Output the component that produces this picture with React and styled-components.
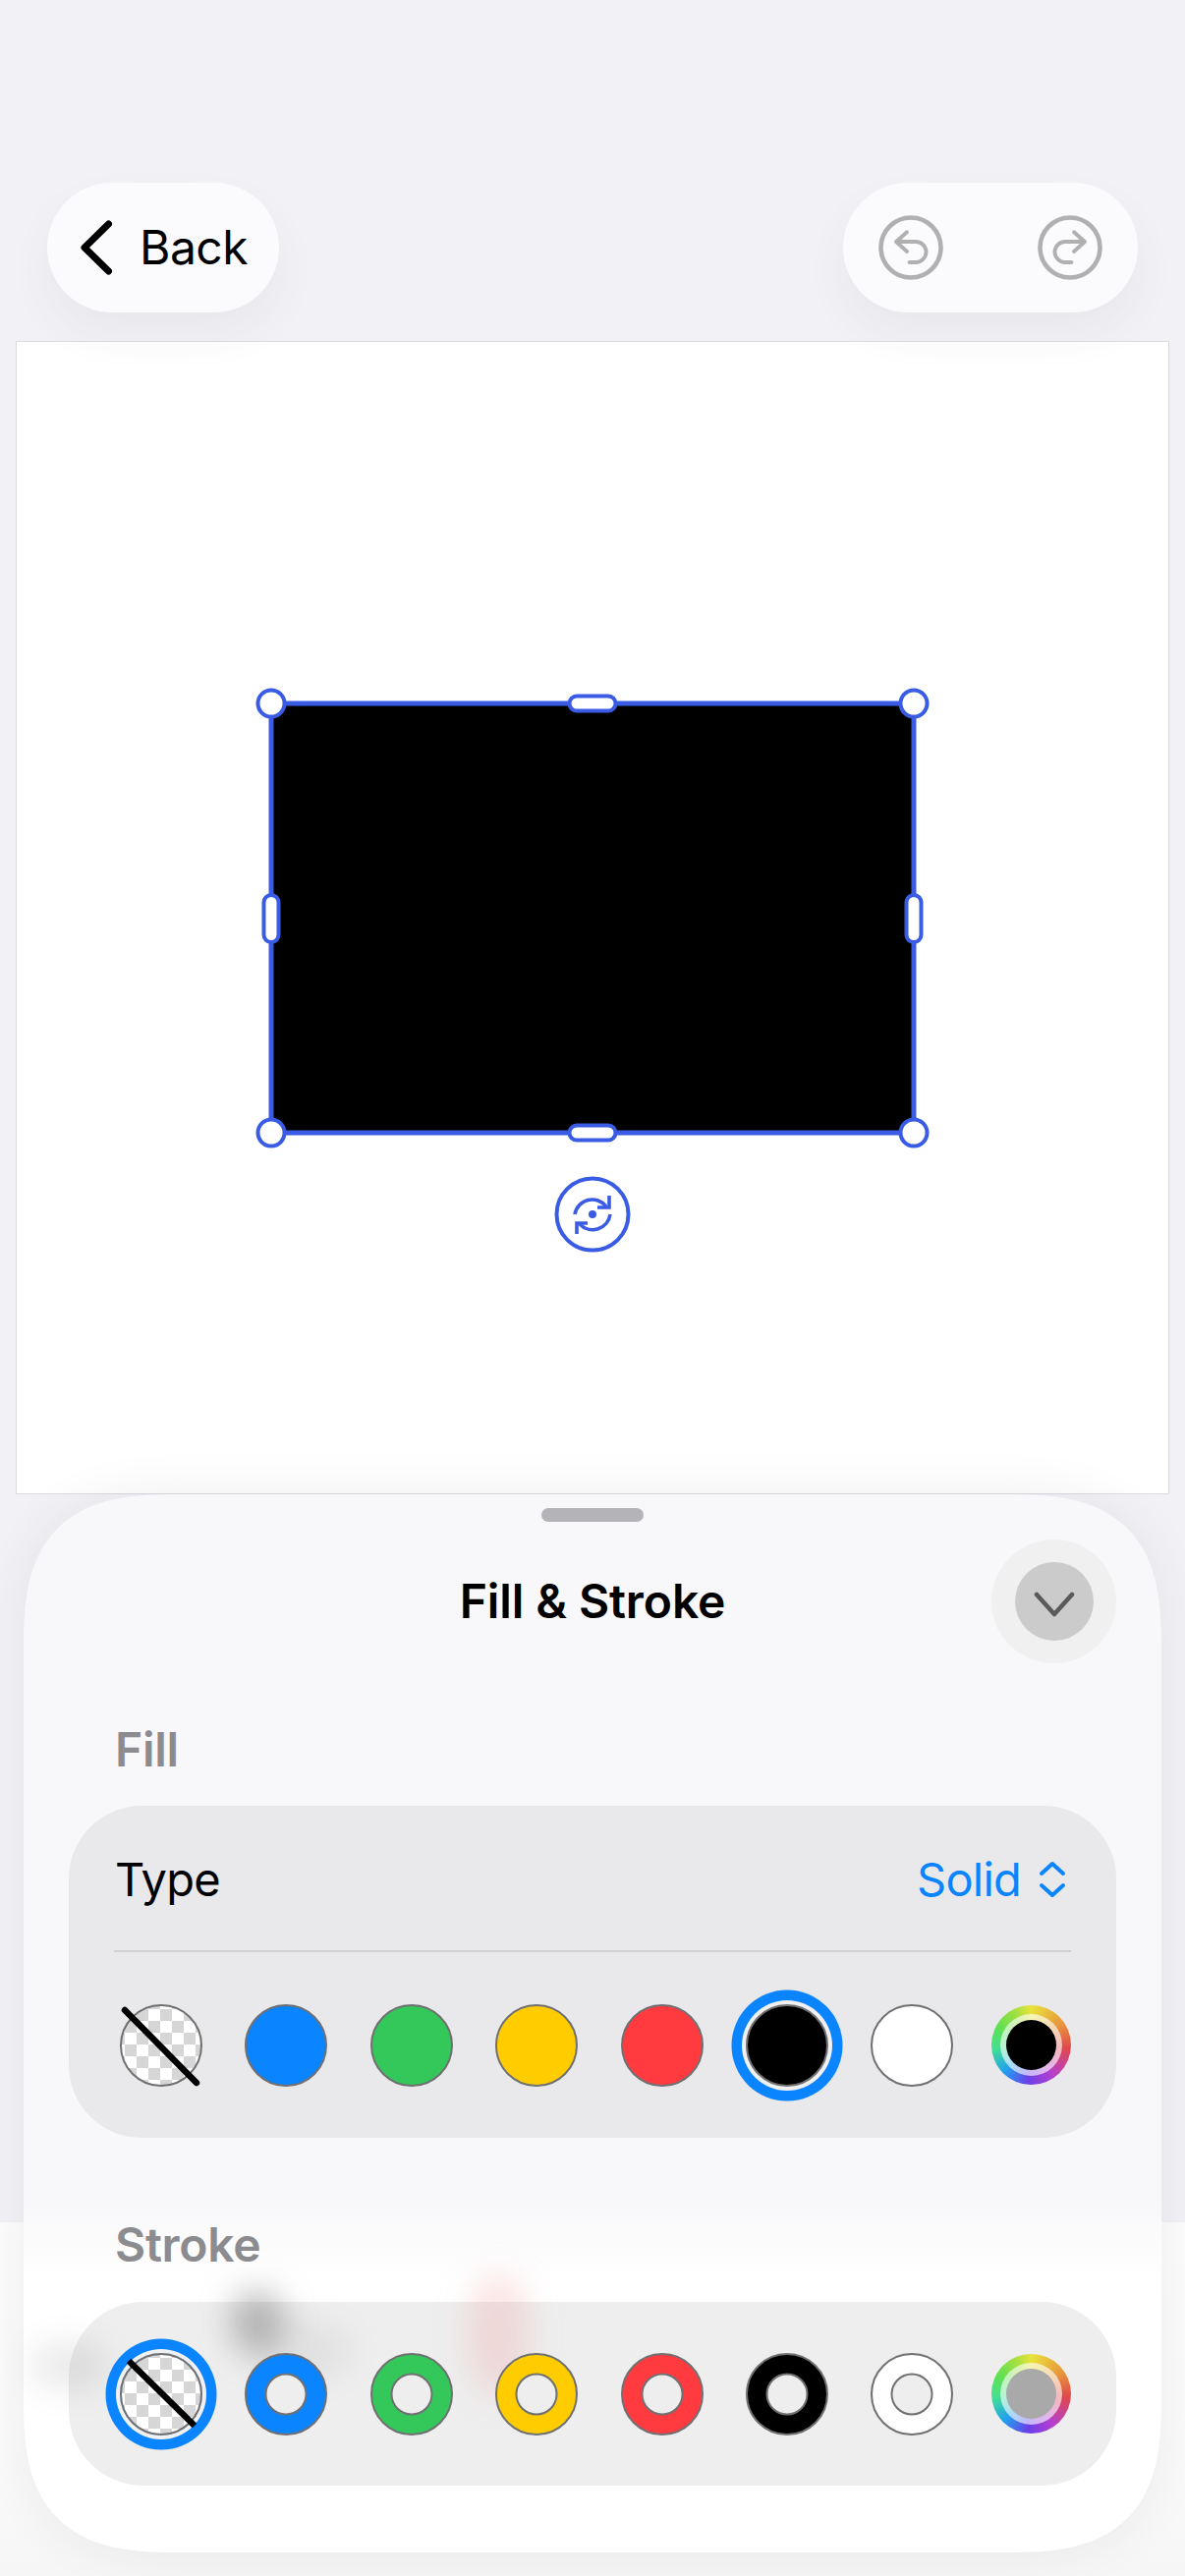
import React from 'react'
import styled, { createGlobalStyle } from 'styled-components'

const GlobalStyle = createGlobalStyle`
  html, body {
    margin: 0;
    padding: 0;
    background: #f2f2f6;
    font-family: Inter, "Liberation Sans", sans-serif;
  }
  * { box-sizing: border-box; }
`

const Page = styled.div`
  position: relative;
  width: 1206px;
  height: 2622px;
  overflow: hidden;
  padding-top: 186px;
  background: #f2f2f6;
`
const GroundFade = styled.div`
  position: absolute;
  left: 0;
  right: 0;
  top: 2262px;
  bottom: 0;
  background: linear-gradient(#fdfdfd, #fbfbfb 60%, #f6f6f6);
`
const Toolbar = styled.div`
  position: relative;
  z-index: 2;
  display: flex;
  justify-content: space-between;
  height: 132px;
  margin: 0 48px 29px;
`
const Pill = styled.div`
  display: flex;
  align-items: center;
  height: 132px;
  border-radius: 66px;
  background: #fbfbfd;
  box-shadow: 0 22px 44px rgba(60, 60, 80, 0.06);
`
const BackPill = styled(Pill)`
  width: 236px;
  padding-left: 33px;
  gap: 27px;
`
const BackLabel = styled.span`
  font-size: 48px;
  line-height: 56px;
  letter-spacing: -0.5px;
  color: #000;
`
const HistoryPill = styled(Pill)`
  width: 300px;
  padding: 0 36px;
  justify-content: space-between;
`
const Canvas = styled.div`
  position: relative;
  display: flex;
  align-items: center;
  justify-content: center;
  height: 1174px;
  margin: 0 16px;
  padding-top: 1px;
  background: #fff;
  border: 1px solid #d9d9de;
`
const Shape = styled.div`
  position: relative;
  width: 654px;
  height: 437px;
  background: #000;
  box-shadow: 0 0 0 2.5px #3a5ce5, inset 0 0 0 2.5px #3a5ce5;
`
const Handle = styled.div`
  position: absolute;
  left: ${p => p.$x};
  top: ${p => p.$y};
  width: ${p => p.$w}px;
  height: ${p => p.$h}px;
  transform: translate(-50%, -50%);
  background: #fff;
  border: 4.5px solid #3a5ce5;
  border-radius: 20px;
`
const RotateButton = styled.div`
  position: absolute;
  left: 50%;
  top: calc(100% + 44px);
  display: flex;
  transform: translateX(-50%);
`
const Sheet = styled.div`
  position: relative;
  z-index: 1;
  height: 1077px;
  margin: 0 24px;
  padding: 14px 46px 0;
  border-radius: 122px;
  background: linear-gradient(#f8f8fa 720px, #ffffff 800px);
  box-shadow: 0 0 50px rgba(40, 40, 60, 0.08);
  @supports (corner-shape: squircle) {
    border-radius: 160px;
    corner-shape: superellipse(1.5);
  }
`
const Grabber = styled.div`
  width: 104px;
  height: 14px;
  margin: 0 auto 18px;
  border-radius: 7px;
  background: #b4b4b8;
`
const SheetHeader = styled.div`
  display: grid;
  grid-template-columns: 1fr auto 1fr;
  align-items: center;
  height: 126px;
`
const SheetTitle = styled.div`
  grid-column: 2;
  font-size: 48px;
  line-height: 56px;
  font-weight: 600;
  letter-spacing: -0.1px;
  color: #000;
`
const CollapseOuter = styled.div`
  grid-column: 3;
  justify-self: end;
  display: flex;
  align-items: center;
  justify-content: center;
  width: 127px;
  height: 126px;
  border-radius: 50%;
  background: #f0f0f1;
`
const CollapseInner = styled.div`
  display: flex;
  align-items: center;
  justify-content: center;
  width: 80px;
  height: 80px;
  padding-top: 5px;
  border-radius: 50%;
  background: #cbcbcb;
`
const SectionLabel = styled.div`
  height: 56px;
  margin: ${p => p.$top}px 0 ${p => p.$bottom}px;
  padding-left: 47px;
  font-size: 48px;
  line-height: 56px;
  font-weight: 600;
  letter-spacing: -0.3px;
  color: #8b8b90;
`
const FillPanel = styled.div`
  height: 338px;
  border-radius: 74px;
  background: #e9e9eb;
`
const StrokePanel = styled.div`
  position: relative;
  height: 187px;
  border-radius: 76px;
  background: #eeeeee;
`
const TypeRow = styled.div`
  display: flex;
  align-items: center;
  justify-content: space-between;
  height: 149px;
  margin: 0 46px;
  padding: 3px 5px 0 1px;
  border-bottom: 2.5px solid #d0d0d2;
`
const TypeLabel = styled.span`
  font-size: 47px;
  line-height: 56px;
  letter-spacing: -0.8px;
  color: #000;
`
const TypeValue = styled.span`
  display: flex;
  align-items: center;
  gap: 18px;
  font-size: 47px;
  line-height: 56px;
  letter-spacing: -0.8px;
  color: #0a84ff;
`
const SwatchRow = styled.div`
  position: relative;
  display: flex;
  align-items: center;
  gap: 43.4px;
  height: ${p => p.$height}px;
  padding-left: 52px;
`
const Swatch = styled.div`
  position: relative;
  flex: none;
  width: 84px;
  height: 84px;
  border-radius: 50%;
  background: ${p => p.$color};
  border: 2px solid #707072;
  box-shadow: ${p => (p.$selected ? '0 0 0 4px #f1f1f3, 0 0 0 14.5px #0a84ff' : 'none')};
`
const CheckerSwatch = styled(Swatch)`
  background: repeating-conic-gradient(#d6d6d6 0 25%, #ffffff 0 50%) 3px 3px / 24px 24px;
`
const StrokeHole = styled.div`
  position: absolute;
  left: 50%;
  top: 50%;
  width: 43px;
  height: 43px;
  transform: translate(-50%, -50%);
  border-radius: 50%;
  background: #eeeeee;
  border: 2px solid #707072;
`
const SlashIcon = styled.svg`
  position: absolute;
  left: -2px;
  top: -2px;
`
const RainbowSwatch = styled.div`
  position: relative;
  flex: none;
  display: flex;
  align-items: center;
  justify-content: center;
  width: 81px;
  height: 81px;
  margin-left: -5px;
  border-radius: 50%;
  background: conic-gradient(#e9e33c 0deg, #e8963c 55deg, #e0484c 95deg, #b53fd0 145deg, #6a3fe8 185deg, #22a0f0 225deg, #43e08e 265deg, #62e052 300deg, #a4e040 335deg, #e9e33c 360deg);
`
const RainbowGlass = styled.div`
  display: flex;
  align-items: center;
  justify-content: center;
  width: 63px;
  height: 63px;
  border-radius: 50%;
  background: rgba(255, 255, 255, 0.62);
`
const RainbowCore = styled.div`
  width: 51px;
  height: 51px;
  border-radius: 50%;
  background: ${p => p.$color};
`
const Blob = styled.div`
  position: absolute;
  left: ${p => p.$x}px;
  top: ${p => p.$y}px;
  width: ${p => p.$w}px;
  height: ${p => p.$h}px;
  border-radius: 50%;
  background: ${p => p.$color};
  filter: blur(${p => p.$blur}px);
`

const BackChevron = () => (
  <svg width="34" height="56" viewBox="0 0 34 56" fill="none">
    <path d="M29.5 4 L5 28 L29.5 52" stroke="#000" strokeWidth="7" strokeLinecap="round" strokeLinejoin="round" />
  </svg>
)

const HistoryIcon = ({ d }) => (
  <svg width="66" height="66" viewBox="0 0 66 66" fill="none" stroke="#b0b0b0" strokeLinecap="round" strokeLinejoin="round">
    <circle cx="33" cy="33" r="30.5" strokeWidth="4.6" />
    <path d={d} strokeWidth="3.8" />
  </svg>
)

const RotateIcon = () => (
  <svg width="78" height="78" viewBox="0 0 78 78" fill="none" stroke="#3a5ce5">
    <circle cx="39" cy="39" r="36.5" strokeWidth="4" />
    <circle cx="39" cy="39" r="4" fill="#3a5ce5" stroke="none" />
    <path d="M21 39 A18 18 0 0 1 53 31" strokeWidth="3.6" />
    <path d="M56 20 V32 H44" strokeWidth="3.6" />
    <path d="M57 39 A18 18 0 0 1 26 49" strokeWidth="3.6" />
    <path d="M23 59 V48 H34" strokeWidth="3.6" />
  </svg>
)

const CollapseChevron = () => (
  <svg width="42" height="26" viewBox="0 0 42 26" fill="none">
    <path d="M3 3 L21 23 L39 3" stroke="#5a5a5a" strokeWidth="4.5" strokeLinecap="round" strokeLinejoin="round" />
  </svg>
)

const UpDownIcon = () => (
  <svg width="28" height="38" viewBox="0 0 28 38" fill="none">
    <path d="M3 13 L14 3 L25 13 M3 25 L14 35 L25 25" stroke="#0a84ff" strokeWidth="4" strokeLinecap="round" strokeLinejoin="round" />
  </svg>
)

const Slash = ({ x1, y1, x2, y2, cap }) => (
  <SlashIcon width="84" height="84" viewBox="0 0 84 84">
    <line x1={x1} y1={y1} x2={x2} y2={y2} stroke="#000" strokeWidth="6.5" strokeLinecap={cap} />
  </SlashIcon>
)

const colors = ['#0a84ff', '#34c759', '#ffcc00', '#ff3b3f', '#000000', '#ffffff']

const App = () => {
  return (
    <>
      <GlobalStyle />
      <Page>
        <GroundFade />
        <Toolbar>
          <BackPill>
            <BackChevron />
            <BackLabel>Back</BackLabel>
          </BackPill>
          <HistoryPill>
            <HistoryIcon d="M29 17.3 L18 27 L29 37 M18 27 H38 A10.5 10.5 0 0 1 38 48 H31.5" />
            <HistoryIcon d="M37 17.3 L48 27 L37 37 M48 27 H28 A10.5 10.5 0 0 0 28 48 H34.5" />
          </HistoryPill>
        </Toolbar>

        <Canvas>
          <Shape>
            <Handle $x="0" $y="0" $w={31} $h={31} />
            <Handle $x="50%" $y="0" $w={51} $h={19} />
            <Handle $x="100%" $y="0" $w={31} $h={31} />
            <Handle $x="0" $y="50%" $w={19} $h={52} />
            <Handle $x="100%" $y="50%" $w={19} $h={52} />
            <Handle $x="0" $y="100%" $w={31} $h={31} />
            <Handle $x="50%" $y="100%" $w={51} $h={19} />
            <Handle $x="100%" $y="100%" $w={31} $h={31} />
            <RotateButton>
              <RotateIcon />
            </RotateButton>
          </Shape>
        </Canvas>

        <Sheet>
          <Grabber />
          <SheetHeader>
            <SheetTitle>Fill &amp; Stroke</SheetTitle>
            <CollapseOuter>
              <CollapseInner>
                <CollapseChevron />
              </CollapseInner>
            </CollapseOuter>
          </SheetHeader>

          <SectionLabel $top={60} $bottom={29}>Fill</SectionLabel>
          <FillPanel>
            <TypeRow>
              <TypeLabel>Type</TypeLabel>
              <TypeValue>
                Solid
                <UpDownIcon />
              </TypeValue>
            </TypeRow>
            <SwatchRow $height={189}>
              <CheckerSwatch>
                <Slash x1={5} y1={6} x2={78} y2={80} cap="round" />
              </CheckerSwatch>
              {colors.map(c => (
                <Swatch key={c} $color={c} $selected={c === '#000000'} />
              ))}
              <RainbowSwatch>
                <RainbowGlass>
                  <RainbowCore $color="#000" />
                </RainbowGlass>
              </RainbowSwatch>
            </SwatchRow>
          </FillPanel>

          <SectionLabel $top={81} $bottom={30}>Stroke</SectionLabel>
          <StrokePanel>
            <Blob $x={-40} $y={40} $w={80} $h={50} $color="rgba(0, 0, 0, 0.08)" $blur={16} />
            <Blob $x={164} $y={-12} $w={56} $h={66} $color="rgba(110, 110, 110, 0.45)" $blur={16} />
            <Blob $x={190} $y={20} $w={100} $h={60} $color="rgba(0, 0, 0, 0.05)" $blur={16} />
            <Blob $x={405} $y={-30} $w={64} $h={125} $color="rgba(240, 150, 150, 0.26)" $blur={16} />
            <SwatchRow $height={187}>
              <CheckerSwatch $selected>
                <Slash x1={9} y1={8} x2={76} y2={74} cap="butt" />
              </CheckerSwatch>
              {colors.map(c => (
                <Swatch key={c} $color={c}>
                  <StrokeHole />
                </Swatch>
              ))}
              <RainbowSwatch>
                <RainbowGlass>
                  <RainbowCore $color="#a9a9a9" />
                </RainbowGlass>
              </RainbowSwatch>
            </SwatchRow>
          </StrokePanel>
        </Sheet>
      </Page>
    </>
  )
}

export default App
